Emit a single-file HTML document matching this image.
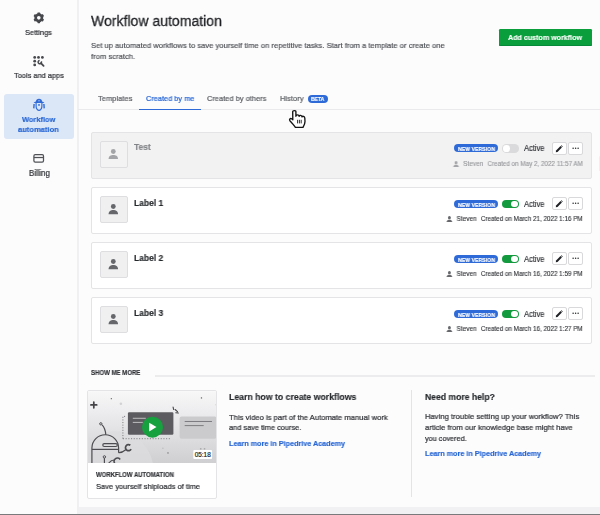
<!DOCTYPE html>
<html><head><meta charset="utf-8"><style>
html,body{margin:0;padding:0;width:600px;height:515px;overflow:hidden;background:#fcfcfd}
body{position:relative;font-family:"Liberation Sans",sans-serif}
.t{position:absolute;white-space:nowrap;-webkit-text-stroke:0.22px currentColor;will-change:transform}
.r{position:absolute;display:block}
</style></head><body>
<div class="r" style="left:0px;top:0px;width:600px;height:515px;background:#fcfcfd;"></div>
<div class="r" style="left:0px;top:0px;width:78px;height:515px;background:#fcfcfd;"></div>
<div class="r" style="left:76.6px;top:0px;width:2px;height:515px;background:#f0f0f3;"></div>
<div class="r" style="left:4px;top:94px;width:69.7px;height:45px;background:#dbe6f7;border-radius:3px;"></div>
<svg class="r" style="left:33.2px;top:12.3px" width="11.6" height="11.6" viewBox="-6 -6 12 12"><g fill="#46484c"><circle r="3.25" fill="none" stroke="#46484c" stroke-width="2.7"/>
<rect x="-1.35" y="-5.6" width="2.7" height="2.6" rx="0.5"/><rect x="-1.35" y="-5.6" width="2.7" height="2.6" rx="0.5" transform="rotate(60)"/><rect x="-1.35" y="-5.6" width="2.7" height="2.6" rx="0.5" transform="rotate(120)"/><rect x="-1.35" y="-5.6" width="2.7" height="2.6" rx="0.5" transform="rotate(180)"/><rect x="-1.35" y="-5.6" width="2.7" height="2.6" rx="0.5" transform="rotate(240)"/><rect x="-1.35" y="-5.6" width="2.7" height="2.6" rx="0.5" transform="rotate(300)"/></g></svg>
<div class="t " style="left:25.3px;top:28.60px;font-size:7.918px;line-height:7.918px;color:#2e3034;transform:scaleX(0.9434);transform-origin:0 0;">Settings</div>
<svg class="r" style="left:30px;top:52px" width="18" height="18" viewBox="30 52 18 18"><g fill="#46484c"><circle cx="34.7" cy="57.4" r="1.4"/><circle cx="38.5" cy="57.4" r="1.4"/><circle cx="42.4" cy="57.4" r="1.4"/><circle cx="34.7" cy="61.2" r="1.4"/><circle cx="34.7" cy="64.9" r="1.4"/></g>
<path d="M40.9 63.2 L43.6 65.9" stroke="#46484c" stroke-width="1.8" stroke-linecap="round"/><path d="M41.34 61.38 A1.7 1.7 0 1 1 39.65 60.41" fill="none" stroke="#46484c" stroke-width="1.5"/></svg>
<div class="t " style="left:14px;top:71.63px;font-size:7.876px;line-height:7.876px;color:#2e3034;transform:scaleX(0.9434);transform-origin:0 0;">Tools and apps</div>
<svg class="r" style="left:30px;top:95px" width="18" height="18" viewBox="30 95 18 18">
<path d="M33.6 102.9 Q34.6 101.6 35.9 101.5 Q36.2 98.8 39 98.8 Q41.8 98.8 42.1 101.5 Q43.4 101.6 44.4 102.9 Z" fill="#2f6ad6"/>
<circle cx="39" cy="100.8" r="0.75" fill="#a9c2ee"/>
<g fill="none" stroke="#2f6ad6" stroke-width="1.15" stroke-linejoin="round">
<path d="M36.1 103 L36.1 106 Q36.1 109.8 39 110.4 Q41.9 109.8 41.9 106 L41.9 103"/>
<path d="M34.1 104 L33.8 108.4 M43.9 104 L44.2 108.4" stroke-width="1.4"/></g>
<rect x="38" y="104.3" width="2" height="1.3" fill="#2f6ad6"/></svg>
<div class="t " style="left:21.9px;top:115.51px;font-size:7.897px;line-height:7.897px;color:#2464d4;transform:scaleX(0.9434);transform-origin:0 0;font-weight:bold;-webkit-text-stroke:0.15px currentColor;">Workflow</div>
<div class="t " style="left:18.4px;top:126.01px;font-size:8.024px;line-height:8.024px;color:#2464d4;transform:scaleX(0.9434);transform-origin:0 0;font-weight:bold;-webkit-text-stroke:0.15px currentColor;">automation</div>
<svg class="r" style="left:30px;top:149px" width="18" height="18" viewBox="30 149 18 18"><rect x="33.9" y="154.6" width="9.6" height="7.5" rx="1.3" fill="none" stroke="#505256" stroke-width="1.25"/><rect x="33.9" y="156.9" width="9.6" height="1.25" fill="#505256"/></svg>
<div class="t " style="left:28.7px;top:169.90px;font-size:8.268px;line-height:8.268px;color:#2e3034;transform:scaleX(0.9434);transform-origin:0 0;">Billing</div>
<div class="t " style="left:91.3px;top:13.26px;font-size:15.044px;line-height:15.044px;color:#1f2124;transform:scaleX(0.9346);transform-origin:0 0;-webkit-text-stroke:0.3px currentColor;">Workflow automation</div>
<div class="t " style="left:91.3px;top:42.05px;font-size:8.088px;line-height:8.088px;color:#505357;transform:scaleX(0.9434);transform-origin:0 0;-webkit-text-stroke:0.2px currentColor;">Set up automated workflows to save yourself time on repetitive tasks. Start from a template or create one</div>
<div class="t " style="left:91.3px;top:52.65px;font-size:8.088px;line-height:8.088px;color:#505357;transform:scaleX(0.9434);transform-origin:0 0;-webkit-text-stroke:0.2px currentColor;">from scratch.</div>
<div class="r" style="left:499px;top:28.8px;width:93px;height:17px;background:#0a9f3c;border-radius:1.2px;box-shadow:inset 0 -1px 0 #07893a;"></div>
<div class="t " style="left:508.2px;top:34.20px;font-size:7.558px;line-height:7.558px;color:#ffffff;transform:scaleX(0.9434);transform-origin:0 0;font-weight:bold;-webkit-text-stroke:0.15px currentColor;">Add custom workflow</div>
<div class="r" style="left:78px;top:108.8px;width:522px;height:1.2px;background:#eaeaed;"></div>
<div class="t " style="left:98px;top:95.12px;font-size:8.003px;line-height:8.003px;color:#5d6064;transform:scaleX(0.9434);transform-origin:0 0;">Templates</div>
<div class="t " style="left:145.6px;top:95.08px;font-size:7.823px;line-height:7.823px;color:#2464d4;transform:scaleX(0.9434);transform-origin:0 0;">Created by me</div>
<div class="r" style="left:139px;top:108.5px;width:62px;height:1.8px;background:#2f6bd8;"></div>
<div class="t " style="left:207px;top:94.98px;font-size:7.939px;line-height:7.939px;color:#5d6064;transform:scaleX(0.9434);transform-origin:0 0;">Created by others</div>
<div class="t " style="left:279.8px;top:94.89px;font-size:8.045px;line-height:8.045px;color:#5d6064;transform:scaleX(0.9434);transform-origin:0 0;">History</div>
<div class="r" style="left:307.8px;top:94.8px;width:20.4px;height:8px;background:#2f6bd8;border-radius:4px;"></div>
<div class="t " style="left:311.2px;top:96.64px;font-size:5.500px;line-height:5.500px;color:#ffffff;transform:scaleX(0.9091);transform-origin:0 0;font-weight:bold;-webkit-text-stroke:0.15px currentColor;">BETA</div>
<div class="r" style="left:91px;top:131.5px;width:501px;height:47px;background:#f2f2f3;box-sizing:border-box;border:1px solid #e4e4e7;border-radius:2px;"></div>
<div class="r" style="left:100.2px;top:140.5px;width:27.4px;height:27.4px;background:#f3f3f4;box-sizing:border-box;border:1px solid #dedee0;border-radius:2px;"></div>
<svg class="r" style="left:108.3px;top:148.9px" width="10.6" height="10.6" viewBox="0 0 11 11"><circle cx="5.5" cy="2.6" r="2.5" fill="#a3a4a7"/><path d="M0.6 10.6 C0.6 7.3 3 6.3 5.5 6.3 S10.4 7.3 10.4 10.6 Z" fill="#a3a4a7"/></svg>
<div class="t " style="left:133.8px;top:143.07px;font-size:9.010px;line-height:9.010px;color:#808285;transform:scaleX(0.9434);transform-origin:0 0;font-weight:bold;-webkit-text-stroke:0.15px currentColor;">Test</div>
<div class="r" style="left:454.2px;top:144.2px;width:43.4px;height:8.2px;background:#2f6bd8;border-radius:4.2px;"></div>
<div class="t " style="left:457.6px;top:146.34px;font-size:5.980px;line-height:5.980px;color:#ffffff;transform:scaleX(0.8696);transform-origin:0 0;font-weight:bold;-webkit-text-stroke:0.15px currentColor;">NEW VERSION</div>
<div class="r" style="left:501.9px;top:144.1px;width:16.9px;height:8.7px;background:#dadadc;border-radius:4.35px;"></div>
<div class="r" style="left:502.9px;top:145.1px;width:6.7px;height:6.7px;background:#ffffff;border-radius:3.35px;"></div>
<div class="t " style="left:523.5px;top:145.41px;font-size:8.132px;line-height:8.132px;color:#2b2e32;transform:scaleX(0.9259);transform-origin:0 0;-webkit-text-stroke:0.15px currentColor;">Active</div>
<div class="r" style="left:552.2px;top:141.8px;width:14.5px;height:13px;background:#ffffff;box-sizing:border-box;border:1px solid #d9d9db;border-radius:2px;"></div>
<div class="r" style="left:568.2px;top:141.8px;width:14.5px;height:13px;background:#ffffff;box-sizing:border-box;border:1px solid #d9d9db;border-radius:2px;"></div>
<svg class="r" style="left:554.8px;top:144.5px" width="8" height="8" viewBox="0 0 8 8"><path d="M0.8 7.2 L1.1 5.5 L5.5 1.1 L6.9 2.5 L2.5 6.9 Z" fill="#1f2124"/><path d="M5.9 0.8 L6.5 0.2 L7.8 1.5 L7.2 2.1Z" fill="#1f2124"/></svg>
<svg class="r" style="left:570px;top:145.5px" width="10" height="4" viewBox="0 0 10 4"><circle cx="3.1" cy="2.2" r="0.75" fill="#26292c"/><circle cx="5.6" cy="2.2" r="0.75" fill="#26292c"/><circle cx="8.1" cy="2.2" r="0.75" fill="#26292c"/></svg>
<div class="r" style="right:17.4px;top:159.8px;height:7.5px;display:flex;align-items:flex-end;white-space:nowrap;font-size:6.68px;line-height:7.5px;color:#96979a;-webkit-text-stroke:0.12px currentColor;will-change:transform;transform:scaleX(0.9434);transform-origin:100% 0"><svg width="6.8" height="6.4" viewBox="0 0 11 11" style="margin-right:4.2px;margin-bottom:0.6px"><circle cx="5.5" cy="2.8" r="2.6" fill="#a3a4a7"/><path d="M0.3 11 C0.3 7.4 3 6.4 5.5 6.4 S10.7 7.4 10.7 11 Z" fill="#a3a4a7"/></svg><span style="margin-right:4.5px;font-size:6.84px">Steven</span><span>Created on May 2, 2022 11:57 AM</span></div>
<div class="r" style="left:91px;top:187px;width:501px;height:47px;background:#ffffff;box-sizing:border-box;border:1px solid #e4e4e7;border-radius:2px;"></div>
<div class="r" style="left:100.2px;top:196px;width:27.4px;height:27.4px;background:#f0f0f1;box-sizing:border-box;border:1px solid #dedee0;border-radius:2px;"></div>
<svg class="r" style="left:108.3px;top:204.4px" width="10.6" height="10.6" viewBox="0 0 11 11"><circle cx="5.5" cy="2.6" r="2.5" fill="#65676b"/><path d="M0.6 10.6 C0.6 7.3 3 6.3 5.5 6.3 S10.4 7.3 10.4 10.6 Z" fill="#65676b"/></svg>
<div class="t " style="left:133.8px;top:198.57px;font-size:9.010px;line-height:9.010px;color:#26292c;transform:scaleX(0.9434);transform-origin:0 0;font-weight:bold;-webkit-text-stroke:0.15px currentColor;">Label 1</div>
<div class="r" style="left:454.2px;top:199.7px;width:43.4px;height:8.2px;background:#2f6bd8;border-radius:4.2px;"></div>
<div class="t " style="left:457.6px;top:201.84px;font-size:5.980px;line-height:5.980px;color:#ffffff;transform:scaleX(0.8696);transform-origin:0 0;font-weight:bold;-webkit-text-stroke:0.15px currentColor;">NEW VERSION</div>
<div class="r" style="left:501.9px;top:199.6px;width:16.9px;height:8.7px;background:#139a3f;border-radius:4.35px;"></div>
<div class="r" style="left:511.4px;top:200.6px;width:6.7px;height:6.7px;background:#ffffff;border-radius:3.35px;"></div>
<div class="t " style="left:523.5px;top:200.91px;font-size:8.132px;line-height:8.132px;color:#2b2e32;transform:scaleX(0.9259);transform-origin:0 0;-webkit-text-stroke:0.15px currentColor;">Active</div>
<div class="r" style="left:552.2px;top:197.3px;width:14.5px;height:13px;background:#ffffff;box-sizing:border-box;border:1px solid #d9d9db;border-radius:2px;"></div>
<div class="r" style="left:568.2px;top:197.3px;width:14.5px;height:13px;background:#ffffff;box-sizing:border-box;border:1px solid #d9d9db;border-radius:2px;"></div>
<svg class="r" style="left:554.8px;top:200px" width="8" height="8" viewBox="0 0 8 8"><path d="M0.8 7.2 L1.1 5.5 L5.5 1.1 L6.9 2.5 L2.5 6.9 Z" fill="#1f2124"/><path d="M5.9 0.8 L6.5 0.2 L7.8 1.5 L7.2 2.1Z" fill="#1f2124"/></svg>
<svg class="r" style="left:570px;top:201px" width="10" height="4" viewBox="0 0 10 4"><circle cx="3.1" cy="2.2" r="0.75" fill="#26292c"/><circle cx="5.6" cy="2.2" r="0.75" fill="#26292c"/><circle cx="8.1" cy="2.2" r="0.75" fill="#26292c"/></svg>
<div class="r" style="right:17.4px;top:215.3px;height:7.5px;display:flex;align-items:flex-end;white-space:nowrap;font-size:6.68px;line-height:7.5px;color:#2e3034;-webkit-text-stroke:0.12px currentColor;will-change:transform;transform:scaleX(0.9434);transform-origin:100% 0"><svg width="6.8" height="6.4" viewBox="0 0 11 11" style="margin-right:4.2px;margin-bottom:0.6px"><circle cx="5.5" cy="2.8" r="2.6" fill="#65676b"/><path d="M0.3 11 C0.3 7.4 3 6.4 5.5 6.4 S10.7 7.4 10.7 11 Z" fill="#65676b"/></svg><span style="margin-right:4.5px;font-size:6.84px">Steven</span><span>Created on March 21, 2022 1:16 PM</span></div>
<div class="r" style="left:91px;top:242px;width:501px;height:47px;background:#ffffff;box-sizing:border-box;border:1px solid #e4e4e7;border-radius:2px;"></div>
<div class="r" style="left:100.2px;top:251px;width:27.4px;height:27.4px;background:#f0f0f1;box-sizing:border-box;border:1px solid #dedee0;border-radius:2px;"></div>
<svg class="r" style="left:108.3px;top:259.4px" width="10.6" height="10.6" viewBox="0 0 11 11"><circle cx="5.5" cy="2.6" r="2.5" fill="#65676b"/><path d="M0.6 10.6 C0.6 7.3 3 6.3 5.5 6.3 S10.4 7.3 10.4 10.6 Z" fill="#65676b"/></svg>
<div class="t " style="left:133.8px;top:253.57px;font-size:9.010px;line-height:9.010px;color:#26292c;transform:scaleX(0.9434);transform-origin:0 0;font-weight:bold;-webkit-text-stroke:0.15px currentColor;">Label 2</div>
<div class="r" style="left:454.2px;top:254.7px;width:43.4px;height:8.2px;background:#2f6bd8;border-radius:4.2px;"></div>
<div class="t " style="left:457.6px;top:256.84px;font-size:5.980px;line-height:5.980px;color:#ffffff;transform:scaleX(0.8696);transform-origin:0 0;font-weight:bold;-webkit-text-stroke:0.15px currentColor;">NEW VERSION</div>
<div class="r" style="left:501.9px;top:254.6px;width:16.9px;height:8.7px;background:#139a3f;border-radius:4.35px;"></div>
<div class="r" style="left:511.4px;top:255.6px;width:6.7px;height:6.7px;background:#ffffff;border-radius:3.35px;"></div>
<div class="t " style="left:523.5px;top:255.91px;font-size:8.132px;line-height:8.132px;color:#2b2e32;transform:scaleX(0.9259);transform-origin:0 0;-webkit-text-stroke:0.15px currentColor;">Active</div>
<div class="r" style="left:552.2px;top:252.3px;width:14.5px;height:13px;background:#ffffff;box-sizing:border-box;border:1px solid #d9d9db;border-radius:2px;"></div>
<div class="r" style="left:568.2px;top:252.3px;width:14.5px;height:13px;background:#ffffff;box-sizing:border-box;border:1px solid #d9d9db;border-radius:2px;"></div>
<svg class="r" style="left:554.8px;top:255px" width="8" height="8" viewBox="0 0 8 8"><path d="M0.8 7.2 L1.1 5.5 L5.5 1.1 L6.9 2.5 L2.5 6.9 Z" fill="#1f2124"/><path d="M5.9 0.8 L6.5 0.2 L7.8 1.5 L7.2 2.1Z" fill="#1f2124"/></svg>
<svg class="r" style="left:570px;top:256px" width="10" height="4" viewBox="0 0 10 4"><circle cx="3.1" cy="2.2" r="0.75" fill="#26292c"/><circle cx="5.6" cy="2.2" r="0.75" fill="#26292c"/><circle cx="8.1" cy="2.2" r="0.75" fill="#26292c"/></svg>
<div class="r" style="right:17.4px;top:270.3px;height:7.5px;display:flex;align-items:flex-end;white-space:nowrap;font-size:6.68px;line-height:7.5px;color:#2e3034;-webkit-text-stroke:0.12px currentColor;will-change:transform;transform:scaleX(0.9434);transform-origin:100% 0"><svg width="6.8" height="6.4" viewBox="0 0 11 11" style="margin-right:4.2px;margin-bottom:0.6px"><circle cx="5.5" cy="2.8" r="2.6" fill="#65676b"/><path d="M0.3 11 C0.3 7.4 3 6.4 5.5 6.4 S10.7 7.4 10.7 11 Z" fill="#65676b"/></svg><span style="margin-right:4.5px;font-size:6.84px">Steven</span><span>Created on March 16, 2022 1:59 PM</span></div>
<div class="r" style="left:91px;top:297px;width:501px;height:47px;background:#ffffff;box-sizing:border-box;border:1px solid #e4e4e7;border-radius:2px;"></div>
<div class="r" style="left:100.2px;top:306px;width:27.4px;height:27.4px;background:#f0f0f1;box-sizing:border-box;border:1px solid #dedee0;border-radius:2px;"></div>
<svg class="r" style="left:108.3px;top:314.4px" width="10.6" height="10.6" viewBox="0 0 11 11"><circle cx="5.5" cy="2.6" r="2.5" fill="#65676b"/><path d="M0.6 10.6 C0.6 7.3 3 6.3 5.5 6.3 S10.4 7.3 10.4 10.6 Z" fill="#65676b"/></svg>
<div class="t " style="left:133.8px;top:308.57px;font-size:9.010px;line-height:9.010px;color:#26292c;transform:scaleX(0.9434);transform-origin:0 0;font-weight:bold;-webkit-text-stroke:0.15px currentColor;">Label 3</div>
<div class="r" style="left:454.2px;top:309.7px;width:43.4px;height:8.2px;background:#2f6bd8;border-radius:4.2px;"></div>
<div class="t " style="left:457.6px;top:311.84px;font-size:5.980px;line-height:5.980px;color:#ffffff;transform:scaleX(0.8696);transform-origin:0 0;font-weight:bold;-webkit-text-stroke:0.15px currentColor;">NEW VERSION</div>
<div class="r" style="left:501.9px;top:309.6px;width:16.9px;height:8.7px;background:#139a3f;border-radius:4.35px;"></div>
<div class="r" style="left:511.4px;top:310.6px;width:6.7px;height:6.7px;background:#ffffff;border-radius:3.35px;"></div>
<div class="t " style="left:523.5px;top:310.91px;font-size:8.132px;line-height:8.132px;color:#2b2e32;transform:scaleX(0.9259);transform-origin:0 0;-webkit-text-stroke:0.15px currentColor;">Active</div>
<div class="r" style="left:552.2px;top:307.3px;width:14.5px;height:13px;background:#ffffff;box-sizing:border-box;border:1px solid #d9d9db;border-radius:2px;"></div>
<div class="r" style="left:568.2px;top:307.3px;width:14.5px;height:13px;background:#ffffff;box-sizing:border-box;border:1px solid #d9d9db;border-radius:2px;"></div>
<svg class="r" style="left:554.8px;top:310px" width="8" height="8" viewBox="0 0 8 8"><path d="M0.8 7.2 L1.1 5.5 L5.5 1.1 L6.9 2.5 L2.5 6.9 Z" fill="#1f2124"/><path d="M5.9 0.8 L6.5 0.2 L7.8 1.5 L7.2 2.1Z" fill="#1f2124"/></svg>
<svg class="r" style="left:570px;top:311px" width="10" height="4" viewBox="0 0 10 4"><circle cx="3.1" cy="2.2" r="0.75" fill="#26292c"/><circle cx="5.6" cy="2.2" r="0.75" fill="#26292c"/><circle cx="8.1" cy="2.2" r="0.75" fill="#26292c"/></svg>
<div class="r" style="right:17.4px;top:325.3px;height:7.5px;display:flex;align-items:flex-end;white-space:nowrap;font-size:6.68px;line-height:7.5px;color:#2e3034;-webkit-text-stroke:0.12px currentColor;will-change:transform;transform:scaleX(0.9434);transform-origin:100% 0"><svg width="6.8" height="6.4" viewBox="0 0 11 11" style="margin-right:4.2px;margin-bottom:0.6px"><circle cx="5.5" cy="2.8" r="2.6" fill="#65676b"/><path d="M0.3 11 C0.3 7.4 3 6.4 5.5 6.4 S10.7 7.4 10.7 11 Z" fill="#65676b"/></svg><span style="margin-right:4.5px;font-size:6.84px">Steven</span><span>Created on March 16, 2022 1:27 PM</span></div>
<div class="r" style="left:598.8px;top:155.5px;width:1.5px;height:15px;background:#efeff1;border-radius:0.7px;"></div>
<div class="t " style="left:91.3px;top:370.36px;font-size:6.424px;line-height:6.424px;color:#2e3034;transform:scaleX(0.9434);transform-origin:0 0;font-weight:bold;-webkit-text-stroke:0.15px currentColor;">SHOW ME MORE</div>
<div class="r" style="left:154.5px;top:375px;width:440px;height:1.6px;background:#ececee;"></div>
<div class="r" style="left:87px;top:390px;width:129.5px;height:108.5px;background:#ffffff;box-sizing:border-box;border:1px solid #e4e4e6;border-radius:2px;"></div>
<svg class="r" style="left:87.5px;top:390.8px" width="128.5" height="72.2" viewBox="87.5 390.8 128.5 72.2">
<defs><linearGradient id="tg" x1="0" y1="0" x2="0" y2="1"><stop offset="0" stop-color="#f7f7f8"/><stop offset="0.3" stop-color="#ececee"/><stop offset="1" stop-color="#cfcfd2"/></linearGradient>
<radialGradient id="rg" cx="0.5" cy="0.5" r="0.5"><stop offset="0" stop-color="#e4e4e6" stop-opacity="0.9"/><stop offset="1" stop-color="#e4e4e6" stop-opacity="0"/></radialGradient></defs>
<rect x="87.5" y="391" width="128.5" height="72" fill="url(#tg)"/>
<circle cx="114" cy="470" r="39" fill="#dcdcdf" opacity="0.75"/>
<g stroke="#444448" stroke-width="1.7" stroke-linecap="round"><path d="M93.3 401.8 v5.8 M90.4 404.7 h5.8"/></g>
<circle cx="110.8" cy="398.5" r="0.6" fill="#555"/>
<circle cx="120.4" cy="403.6" r="1.3" fill="#d2d2d5"/>
<circle cx="201" cy="397.7" r="0.7" fill="#555"/>
<circle cx="215.5" cy="404.5" r="0.8" fill="#d6d6d8"/>
<path d="M122.4 438.5 V416.2 h3" stroke="#808084" stroke-width="1" stroke-dasharray="1.1 1.5" fill="none"/>
<path d="M122.4 438.5 H170" stroke="#808084" stroke-width="1" stroke-dasharray="1.1 1.6" fill="none"/>
<rect x="127.4" y="412" width="45.5" height="22.5" rx="1.2" fill="#5c5c60"/>
<path d="M132.3 418.1 h13 M132.3 422.2 h10" stroke="#c8c8cb" stroke-width="0.9"/>
<g stroke="#444448" stroke-width="1.1" stroke-linecap="round"><path d="M172.6 406.9 l0.5 2.4 M174.6 409.3 l2.4 2.2 M175.3 412.6 l2.6 0.2"/></g>
<rect x="179.1" y="416.4" width="37" height="22.1" rx="2" fill="#cbcbce"/>
<path d="M184.2 421.3 h27.3 M184.2 425.4 h19" stroke="#7c7c80" stroke-width="1"/>
<circle cx="152" cy="427" r="10.5" fill="#16a03e"/>
<path d="M148.7 422.6 L156 426.9 L148.7 431.2 Z" fill="#ffffff"/>
<circle cx="162.4" cy="448" r="0.8" fill="#bdbdc0"/>
<circle cx="167.5" cy="452.7" r="0.6" fill="#555"/>
<path d="M199.5 448.7 h1.5 M203.3 448.7 h1.5" stroke="#777" stroke-width="0.7"/>
<g fill="none" stroke="#4d4d51" stroke-width="1.2">
<path d="M101.6 424.6 Q104.8 428 105.3 434.5"/>
<path d="M91.4 463 V447.9 A13.35 13.35 0 0 1 118.1 447.9 V452.5"/>
<path d="M91.4 449.2 H118.1"/>
<rect x="102.3" y="443.4" width="14.5" height="2.9" rx="1.45"/>
<path d="M118.1 452.5 Q121.5 452.8 125.2 449.6"/>
<path d="M130.6 448.9 A3 3 0 1 1 129.8 445.1" stroke-width="1.7"/>
<path d="M103.9 457.9 V463"/>
<path d="M108.2 463 Q111 459.6 114 459.8"/>
<path d="M114.2 463 A2.8 2.8 0 0 1 119.6 459.2" stroke-width="1.7"/>
</g>
<circle cx="100.3" cy="423.6" r="1.15" fill="#d8d8db" stroke="#4d4d51" stroke-width="1"/>
<circle cx="103.9" cy="456.7" r="1.2" fill="#d8d8db" stroke="#4d4d51" stroke-width="1"/>
<rect x="192.8" y="449.9" width="18.8" height="9" rx="1" fill="#ffffff"/>
<text x="202.2" y="457.2" text-anchor="middle" font-family="Liberation Sans" font-size="7" fill="#222" stroke="#222" stroke-width="0.2" transform="translate(202.2 0) scale(0.92 1) translate(-202.2 0)">05:18</text>
</svg>
<div class="t " style="left:95.8px;top:471.73px;font-size:6.339px;line-height:6.339px;color:#2e3034;transform:scaleX(0.9434);transform-origin:0 0;font-weight:bold;-webkit-text-stroke:0.15px currentColor;">WORKFLOW AUTOMATION</div>
<div class="t " style="left:96.3px;top:482.84px;font-size:7.982px;line-height:7.982px;color:#2e3034;transform:scaleX(0.9434);transform-origin:0 0;">Save yourself shiploads of time</div>
<div class="t " style="left:229.3px;top:393.17px;font-size:9.243px;line-height:9.243px;color:#26292c;transform:scaleX(0.9434);transform-origin:0 0;font-weight:bold;-webkit-text-stroke:0.15px currentColor;">Learn how to create workflows</div>
<div class="t " style="left:229.3px;top:414.13px;font-size:8.109px;line-height:8.109px;color:#2e3034;transform:scaleX(0.9434);transform-origin:0 0;">This video is part of the Automate manual work</div>
<div class="t " style="left:229.3px;top:424.36px;font-size:7.844px;line-height:7.844px;color:#2e3034;transform:scaleX(0.9434);transform-origin:0 0;">and save time course.</div>
<div class="t " style="left:229.3px;top:439.80px;font-size:7.674px;line-height:7.674px;color:#2464d4;transform:scaleX(0.9434);transform-origin:0 0;font-weight:bold;-webkit-text-stroke:0.15px currentColor;">Learn more in Pipedrive Academy</div>
<div class="r" style="left:411px;top:390px;width:1.2px;height:107px;background:#e4e4e6;"></div>
<div class="t " style="left:425.1px;top:392.86px;font-size:9.137px;line-height:9.137px;color:#26292c;transform:scaleX(0.9434);transform-origin:0 0;font-weight:bold;-webkit-text-stroke:0.15px currentColor;">Need more help?</div>
<div class="t " style="left:425.1px;top:413.23px;font-size:8.120px;line-height:8.120px;color:#2e3034;transform:scaleX(0.9434);transform-origin:0 0;">Having trouble setting up your workflow? This</div>
<div class="t " style="left:425.1px;top:423.93px;font-size:8.109px;line-height:8.109px;color:#2e3034;transform:scaleX(0.9434);transform-origin:0 0;">article from our knowledge base might have</div>
<div class="t " style="left:425.1px;top:434.77px;font-size:7.717px;line-height:7.717px;color:#2e3034;transform:scaleX(0.9434);transform-origin:0 0;">you covered.</div>
<div class="t " style="left:425.1px;top:450.30px;font-size:7.674px;line-height:7.674px;color:#2464d4;transform:scaleX(0.9434);transform-origin:0 0;font-weight:bold;-webkit-text-stroke:0.15px currentColor;">Learn more in Pipedrive Academy</div>
<svg class="r" style="left:287.5px;top:108.5px" width="20" height="21" viewBox="-1 -1 20 21"><path d="M3.7 1.6 C3.7 0.2 6.9 0.2 6.9 1.6 L6.9 6.2 C7.2 4.6 9.9 4.4 10.2 6.3 C10.6 5 12.8 5.1 13 6.9 C13.5 5.8 15.6 6.2 15.8 8 L16 11.5 C16.1 13.5 15 15.5 14 17.3 L6.4 17.3 C5.2 15.5 3 13 0.9 10.7 C0 9.6 1.2 7.8 2.6 8.8 L3.8 9.8 Z" fill="#fff" stroke="#141414" stroke-width="1.35" stroke-linejoin="round"/>
<path d="M8.6 9.8 v3.6 M10.4 9.8 v3.6 M12.2 9.8 v3.6" stroke="#222" stroke-width="0.95"/></svg>
<div class="r" style="left:78.6px;top:507px;width:521.4px;height:7px;background:#f1f1f3;"></div>
<div class="r" style="left:0px;top:513.5px;width:600px;height:1.5px;background:#7a7a7c;"></div>
</body></html>
